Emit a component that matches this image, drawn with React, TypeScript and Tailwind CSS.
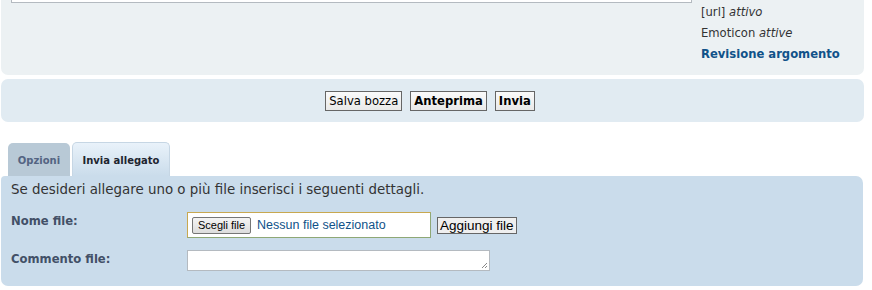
const font = "font-['DejaVu_Sans',Verdana,sans-serif]";

const TopPanel = () => (
  <div className="ml-[1px] flex h-[75px] w-[863px] rounded-b-[7px] bg-[#ECF1F3]">
    <div className="ml-[10px] h-[3px] w-[681px] border border-t-0 border-[#B4BAC0] bg-white" />
    <div className="ml-[9px] pt-[2px] text-[11.6px] leading-[21px] text-[#333]">
      <div>
        [url] <em>attivo</em>
      </div>
      <div>
        Emoticon <em>attive</em>
      </div>
      <div className="font-bold text-[#105289]">Revisione argomento</div>
    </div>
  </div>
);

const Btn = ({ label, bold }: { label: string; bold?: boolean }) => (
  <button
    className={
      "h-[20px] border border-[#666] bg-gradient-to-b from-[#FAFAFA] to-[#E9E9E9] px-[3px] text-[11.6px] leading-[16px] text-black " +
      (bold ? "font-bold" : "")
    }
  >
    {label}
  </button>
);

const ActionPanel = () => (
  <div className="ml-[1px] mt-[4px] flex h-[43px] w-[863px] justify-center gap-[8px] rounded-[7px] bg-[#E1EBF2] pr-[5px] pt-[12px]">
    <Btn label="Salva bozza" />
    <Btn label="Anteprima" bold />
    <Btn label="Invia" bold />
  </div>
);

const Tabs = () => (
  <div className="ml-[8px] mt-[20px] flex items-end gap-[2px]">
    <div className="flex h-[33px] w-[62px] items-center justify-center rounded-t-[5px] bg-[#B8C9D6] pt-[1px] text-[10px] font-bold text-[#536482]">
      Opzioni
    </div>
    <div className="flex h-[34px] w-[98px] items-center justify-center rounded-t-[5px] border border-b-0 border-[#C6D6E4] bg-gradient-to-b from-[#E9F2FA] to-[#CADCEB] pt-[1px] text-[10px] font-bold text-[#1E2530]">
      Invia allegato
    </div>
  </div>
);

const AttachPanel = () => (
  <div className="ml-[1px] h-[110px] w-[862px] rounded-[7px] rounded-tl-[4px] bg-[#CADCEB] px-[10px] pt-[5px] text-[#333]">
    <div className="text-[13.4px] leading-[18px]">
      Se desideri allegare uno o più file inserisci i seguenti dettagli.
    </div>
    <div className="mt-[13px] flex items-start">
      <div className="w-[176px] pt-[2px] text-[11.6px] font-bold leading-[14px] text-[#425067]">Nome file:</div>
      <div className="flex h-[26px] w-[244px] items-center border border-[#C8A850] border-b-[#8FA876] border-r-[#8FA876] bg-white pl-[4px]">
        <span className="flex h-[17px] items-center rounded-[2px] border border-[#767676] bg-gradient-to-b from-[#F4F4F4] to-[#DDDDDD] px-[5px] font-['Liberation_Sans',Arial,sans-serif] text-[11px] text-black">
          Scegli file
        </span>
        <span className="ml-[6px] font-['Liberation_Sans',Arial,sans-serif] text-[12.5px] text-[#105289]">
          Nessun file selezionato
        </span>
      </div>
      <button className="ml-[6px] mt-[5px] h-[17px] border border-[#666] bg-[#EFEFEF] px-[2px] font-['Liberation_Sans',Arial,sans-serif] text-[13.5px] leading-[13px] text-black">
        Aggiungi file
      </button>
    </div>
    <div className="mt-[12px] flex items-start">
      <div className="w-[176px] pt-[2px] text-[11.6px] font-bold leading-[14px] text-[#425067]">Commento file:</div>
      <div className="relative h-[21px] w-[303px] border border-[#B4BAC0] bg-white">
        <svg className="absolute bottom-[1px] right-[1px]" width="7" height="7" viewBox="0 0 7 7">
          <path d="M6 1 L1 6 M6 4 L4 6" stroke="#888" strokeWidth="1" />
        </svg>
      </div>
    </div>
  </div>
);

export default function App() {
  return (
    <div className={`${font} h-[290px] w-[872px] overflow-hidden bg-white`}>
      <TopPanel />
      <ActionPanel />
      <Tabs />
      <AttachPanel />
    </div>
  );
}
